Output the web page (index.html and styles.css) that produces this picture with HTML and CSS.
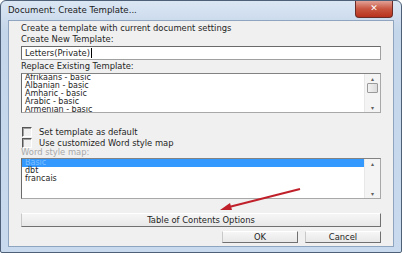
FILE: index.html
```html
<!DOCTYPE html>
<html lang="en">
<head>
  <meta charset="UTF-8" />
  <title>Document: Create Template...</title>
  <link rel="stylesheet" href="styles.css">
</head>
<body>
  <div class="window">
    <div class="titlebar">
      <span class="title">Document: Create Template...</span>
      <span class="close">&#x2715;</span>
    </div>
    <div class="client">
      <div class="line first">Create a template with current document settings</div>
      <div class="line">Create New Template:</div>
      <div class="input">Letters(Private)<span class="caret"></span></div>
      <div class="line">Replace Existing Template:</div>
      <div class="listbox">
        <ul class="items">
          <li>Afrikaans - basic</li>
          <li>Albanian - basic</li>
          <li>Amharic - basic</li>
          <li>Arabic - basic</li>
          <li class="partial">Armenian - basic</li>
        </ul>
        <div class="scrollbar">
          <span class="arrow">&#9652;</span>
          <span class="thumb"></span>
          <span class="track"></span>
          <span class="arrow">&#9662;</span>
        </div>
      </div>
      <label class="check first"><span class="box"></span>Set template as default</label>
      <label class="check"><span class="box"></span>Use customized Word style map</label>
      <div class="line disabled">Word style map:</div>
      <div class="listbox tall">
        <ul class="items">
          <li class="selected">Basic</li>
          <li>dbt</li>
          <li>francais</li>
        </ul>
        <div class="scrollbar">
          <span class="arrow">&#9652;</span>
          <span class="track"></span>
          <span class="arrow">&#9662;</span>
        </div>
      </div>
      <button class="btn wide">Table of Contents Options</button>
      <div class="actions">
        <button class="btn">OK</button>
        <button class="btn">Cancel</button>
      </div>
    </div>
    <svg class="annotation" width="402" height="253" viewBox="0 0 402 253">
      <line x1="300" y1="189" x2="229" y2="207" stroke="#c0202a" stroke-width="2"/>
      <polygon points="220,210 230,203 232,210" fill="#c0202a"/>
    </svg>
  </div>
</body>
</html>
```

FILE: styles.css
```css
body {
  margin: 0;
  font-family: "DejaVu Sans", "Liberation Sans", sans-serif;
  font-size: 8.4px;
  color: #1e1e1e;
  background: #fff;
}
.window {
  position: relative;
  width: 400px;
  height: 251px;
  border: 1px solid #4d6078;
  border-radius: 6px 6px 2px 2px;
  background: linear-gradient(#dbe6f3, #c4d6ea 30px, #c9daee);
}
.titlebar {
  display: flex;
  align-items: flex-start;
  height: 19px;
  padding-left: 7px;
}
.title {
  margin-top: 4px;
  font-size: 8.6px;
  color: #1a1a1a;
}
.close {
  margin-left: auto;
  margin-right: 8px;
  width: 36px;
  height: 16px;
  border: 1px solid #6b2b26;
  border-top: none;
  border-radius: 0 0 4px 4px;
  background: linear-gradient(#e2a195, #c8553f 50%, #b8321c);
  color: #fff;
  font-size: 9px;
  font-weight: bold;
  text-align: center;
  line-height: 15px;
}
.client {
  margin: 0 7px;
  height: 220px;
  padding: 2px 12px 3px 12px;
  border: 1px solid #8ea4bf;
  background: #f0f0f0;
}
.line {
  height: 12px;
  line-height: 11px;
  white-space: nowrap;
}
.line.first {
  height: 11px;
}
.line.disabled {
  color: #a8a8a8;
  height: 10px;
  line-height: 9px;
}
.input {
  height: 12px;
  margin-bottom: 1px;
  padding-left: 3px;
  border: 1px solid #a0a0a0;
  border-top-color: #6a6a6a;
  border-left-color: #6a6a6a;
  background: #fff;
  line-height: 12px;
}
.caret {
  display: inline-block;
  width: 1px;
  height: 10px;
  margin-left: 1px;
  background: #000;
  vertical-align: -2px;
}
.listbox {
  display: flex;
  height: 38px;
  border: 1px solid #a8a8a8;
  border-top-color: #828282;
  border-left-color: #6a6a6a;
  background: #fff;
}
.listbox.tall {
  height: 39px;
}
.items {
  flex: 1;
  margin: 0;
  padding: 0;
  list-style: none;
  overflow: hidden;
}
.items li {
  height: 8px;
  font-size: 8px;
  line-height: 8px;
  padding-left: 3px;
}
.items li.partial {
  height: 6px;
  overflow: hidden;
}
.items li.selected {
  background: #3399ff;
  color: #7fbfff;
}
.scrollbar {
  display: flex;
  flex-direction: column;
  width: 15px;
  background: #f4f4f4;
  border-left: 1px solid #e8e8e8;
}
.arrow {
  height: 9px;
  font-size: 6px;
  line-height: 9px;
  text-align: center;
  color: #606060;
}
.thumb {
  height: 8px;
  margin: 0 2px;
  border: 1px solid #9a9a9a;
  border-radius: 1px;
  background: linear-gradient(90deg, #f2f2f2, #dcdcdc);
}
.track {
  flex: 1;
}
.check {
  display: flex;
  align-items: center;
  height: 11px;
  padding-left: 1px;
}
.check.first {
  margin-top: 13px;
}
.box {
  width: 8px;
  height: 8px;
  margin-right: 7px;
  border: 1px solid #fff;
  border-top-color: #555;
  border-left-color: #555;
  box-shadow: inset 1px 1px 0 #a0a0a0;
}
.btn {
  display: block;
  height: 14px;
  padding: 0;
  font-family: inherit;
  font-size: 8.4px;
  color: #1e1e1e;
  background: linear-gradient(#f6f6f6, #e8e8e8);
  border: 1px solid #dcdcdc;
  border-right-color: #707070;
  border-bottom-color: #707070;
  border-top-color: #ffffff;
  border-left-color: #c8c8c8;
}
.btn.wide {
  width: 100%;
  margin-top: 14px;
}
.actions {
  display: flex;
  justify-content: flex-end;
  gap: 7px;
  margin-top: 4px;
}
.actions .btn {
  width: 76px;
  height: 12px;
  line-height: 10px;
}
.annotation {
  position: absolute;
  left: -1px;
  top: -1px;
  pointer-events: none;
}
```
